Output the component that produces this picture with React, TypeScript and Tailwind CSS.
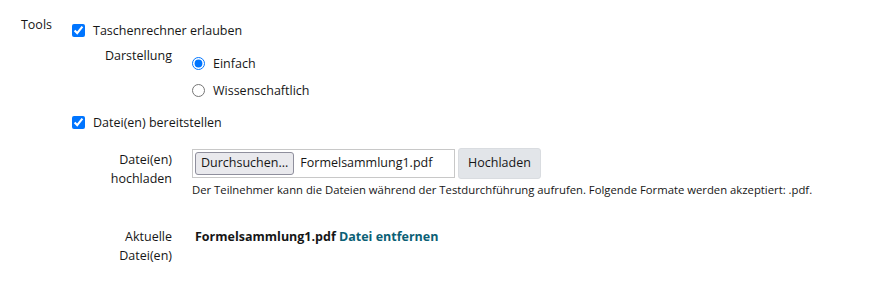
import React from 'react'

const font = { fontFamily: '"Open Sans", "Noto Sans", sans-serif' }

function SubRow({ label, children, className = '' }: { label: React.ReactNode; children: React.ReactNode; className?: string }) {
  return (
    <div className={`flex gap-[20px] ${className}`}>
      <div className="w-[100px] shrink-0 text-right leading-[19px]">{label}</div>
      <div className="flex-1">{children}</div>
    </div>
  )
}

export default function App() {
  return (
    <div className="w-[878px] h-[289px] bg-white text-[12.5px] text-[#161616]" style={font}>
      <div className="flex gap-[20px] pt-[15px]">
        <div className="w-[52px] shrink-0 text-right leading-[19px]">Tools</div>
        <div className="flex-1 pt-[6px]">
          {/* Taschenrechner */}
          <label className="flex items-center gap-[8px] leading-[19px]">
            <input type="checkbox" defaultChecked className="m-0 w-[13px] h-[13px]" />
            <span>Taschenrechner erlauben</span>
          </label>
          <SubRow label="Darstellung" className="mt-[6px]">
            <div className="pt-[8px]">
              <label className="flex items-center gap-[8px] leading-[19px]">
                <input type="radio" name="mode" defaultChecked className="m-0 w-[13px] h-[13px]" />
                <span>Einfach</span>
              </label>
              <label className="flex items-center gap-[8px] leading-[19px] mt-[8px]">
                <input type="radio" name="mode" className="m-0 w-[13px] h-[13px]" />
                <span>Wissenschaftlich</span>
              </label>
            </div>
          </SubRow>

          {/* Dateien */}
          <label className="flex items-center gap-[8px] leading-[19px] mt-[13px]">
            <input type="checkbox" defaultChecked className="m-0 w-[13px] h-[13px]" />
            <span>Datei(en) bereitstellen</span>
          </label>
          <SubRow label={<>Datei(en)<br />hochladen</>} className="mt-[18px]">
            <div className="-mt-[2px]">
              <div className="flex items-center gap-[3px]">
                <div className="flex items-center w-[263px] h-[29px] border border-[#c8c8c8] bg-white px-[2px]">
                  <span className="h-[23px] px-[5px] flex items-center border border-[#8f8f9d] rounded-[3px] bg-[#e9e9ed] text-[#161616]">Durchsuchen...</span>
                  <span className="ml-[6px]">Formelsammlung1.pdf</span>
                </div>
                <button className="h-[31px] px-[9px] rounded-[3px] bg-[#e2e5e9] border border-[#d9dce0] text-[#161616]">Hochladen</button>
              </div>
              <p className="mt-[3px] text-[11.3px] leading-[16px] text-[#161616]">
                Der Teilnehmer kann die Dateien während der Testdurchführung aufrufen. Folgende Formate werden akzeptiert: .pdf.
              </p>
            </div>
          </SubRow>
          <SubRow label={<>Aktuelle<br />Datei(en)</>} className="mt-[29px]">
            <div className="pl-[3px] leading-[19px]">
              <span className="font-bold">Formelsammlung1.pdf</span>{' '}
              <a href="#" className="font-bold text-[#0b5f75]">Datei entfernen</a>
            </div>
          </SubRow>
        </div>
      </div>
    </div>
  )
}
